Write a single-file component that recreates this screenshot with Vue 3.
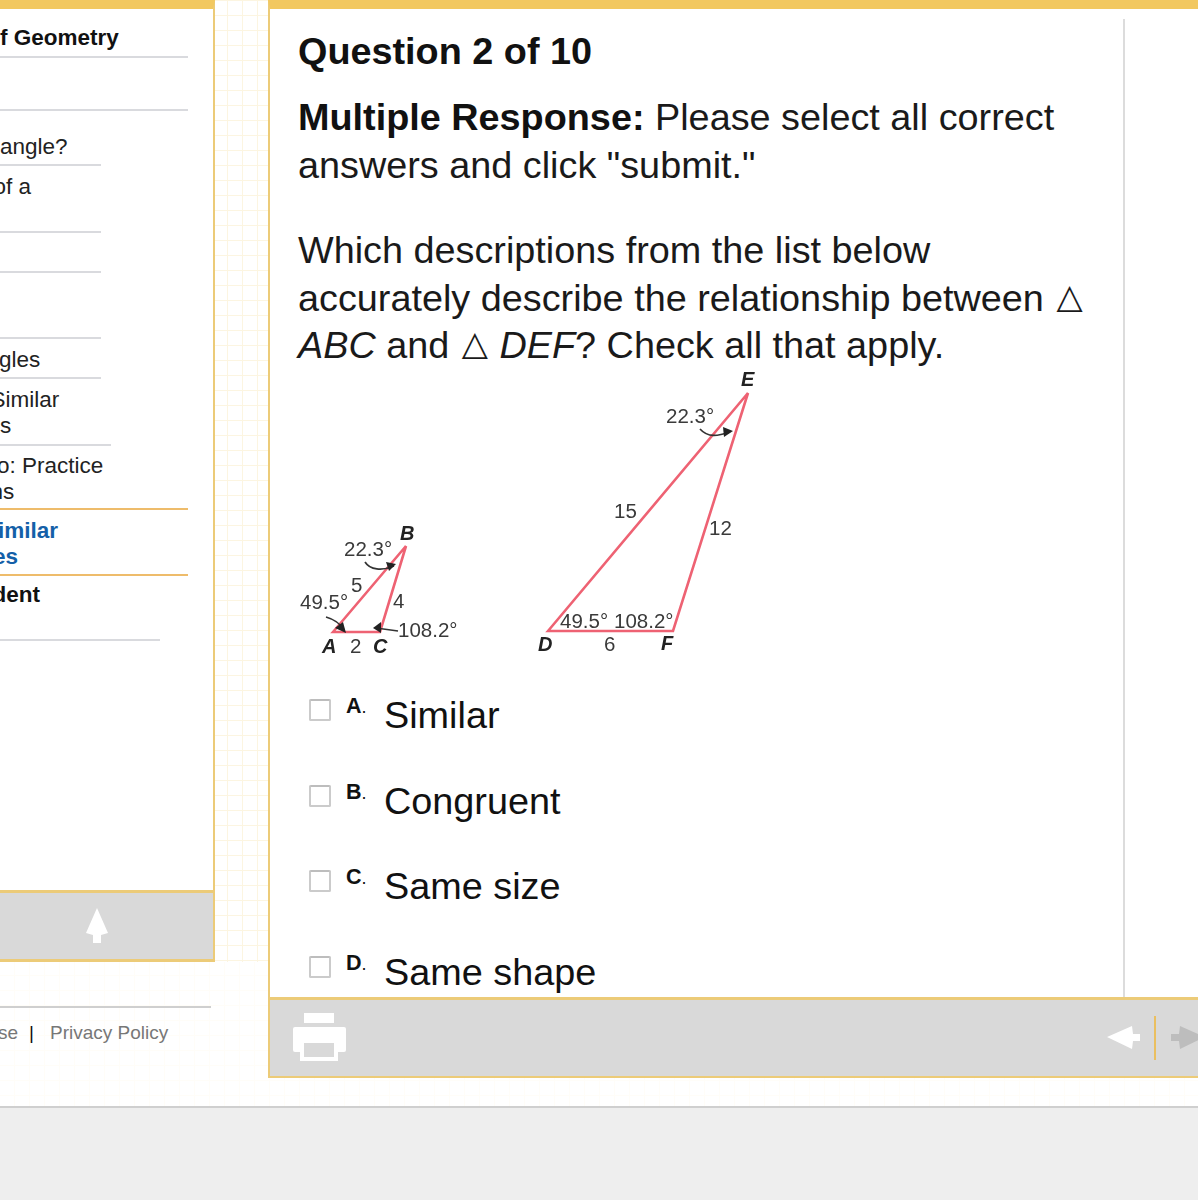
<script setup>
// sidebar rows, cut off on the left like in the course window
const navItems = [
  { lines: [['f Geometry', 0]], height: 49, rule: 188, top: 16, kind: 'bold' },
  { lines: [], height: 53, rule: 188 },
  { lines: [['angle?', 0]], height: 55, rule: 101, top: 23 },
  { lines: [['of a', -6.5]], height: 67, rule: 101 },
  { lines: [], height: 40, rule: 101 },
  { lines: [], height: 66, rule: 101 },
  { lines: [['gles', -1]], height: 40, rule: 101 },
  { lines: [['Similar', -9.5], ['s', 0]], height: 67, rule: 111 },
  { lines: [['o: Practice', -3], ['ns', -9.5]], height: 64, rule: 188, top: 7 },
  { lines: [['imilar', -2], ['es', -7]], height: 66, rule: 188, kind: 'current' },
  { lines: [['dent', -7.5]], height: 65, rule: 160, top: 6, kind: 'bold' }
]

const options = [
  { letter: 'A', text: 'Similar' },
  { letter: 'B', text: 'Congruent' },
  { letter: 'C', text: 'Same size' },
  { letter: 'D', text: 'Same shape' }
]

function ruleColor(item, i) {
  // the current row has orange rules above and below
  return item.kind === 'current' || navItems[i + 1]?.kind === 'current' ? '#eebc6b' : '#d9dade'
}
</script>

<template>
  <div class="page">
    <div class="stage">
      <div class="side">
        <div class="side-panel">
          <ul class="nav">
            <li
              v-for="(item, i) in navItems"
              :key="i"
              class="nav-item"
              :class="item.kind"
              :style="{ height: item.height + 'px', paddingTop: (item.top ?? 8) + 'px' }"
            >
              <span
                v-for="line in item.lines"
                :key="line[0]"
                class="nav-line"
                :style="{ marginLeft: line[1] + 'px' }"
              >{{ line[0] }}</span>
              <i class="nav-rule" :style="{ width: item.rule + 'px', background: ruleColor(item, i) }"></i>
            </li>
          </ul>
          <div class="side-bar">
            <svg class="up" width="24" height="36" viewBox="0 0 24 36">
              <path d="M12 0 L23 25 L16 27 L16 35 L8 35 L8 27 L1 25 Z" fill="#fff" />
            </svg>
          </div>
        </div>
        <div class="side-foot">
          <span class="foot-cut">se</span>
          <span class="sep">|</span>
          <span>Privacy Policy</span>
        </div>
      </div>

      <div class="gutter"></div>

      <div class="main">
        <div class="content">
          <div class="scroll">
            <h1>Question 2 of 10</h1>
            <p class="intro"><b>Multiple Response:</b> Please select all correct answers and click "submit."</p>
            <p class="question">
              Which descriptions from the list below accurately describe the relationship between <span class="delta">△</span> <em>ABC</em> and <span class="delta">△</span> <em>DEF</em>? Check all that apply.
            </p>

            <svg class="figure" width="470" height="300" viewBox="298 362 470 300">
              <g fill="none" stroke="#ee6273" stroke-width="2.6" stroke-linejoin="miter">
                <path d="M333 632 L406 546 L380 632 Z" />
                <path d="M548 631 L748 393 L673 631 Z" />
              </g>
              <g fill="none" stroke="#333" stroke-width="1.7">
                <path d="M365 562 C370 570 382 571 394 566" />
                <path d="M326 617 C333 619 340 623 344 630" />
                <path d="M398 631 L376 628" />
                <path d="M700 429 C708 438 718 436 730 432" />
              </g>
              <g fill="#222">
                <path d="M396 564 L386 562 L389 571 Z" />
                <path d="M346 633 L335 628 L343 622 Z" />
                <path d="M373 628 L381 622 L381 633 Z" />
                <path d="M733 431 L723 427 L724 437 Z" />
              </g>
              <g class="fig-text">
                <text x="344" y="556">22.3°</text>
                <text x="351" y="592">5</text>
                <text x="300" y="609">49.5°</text>
                <text x="393" y="608">4</text>
                <text x="398" y="637">108.2°</text>
                <text x="350" y="653">2</text>
                <text x="666" y="423">22.3°</text>
                <text x="614" y="518">15</text>
                <text x="709" y="535">12</text>
                <text x="560" y="628">49.5°</text>
                <text x="614" y="628">108.2°</text>
                <text x="604" y="651">6</text>
              </g>
              <g class="fig-label">
                <text x="400" y="540">B</text>
                <text x="322" y="653">A</text>
                <text x="373" y="653">C</text>
                <text x="741" y="386">E</text>
                <text x="538" y="651">D</text>
                <text x="661" y="650">F</text>
              </g>
            </svg>

            <ul class="options">
              <li v-for="opt in options" :key="opt.letter" class="option">
                <span class="check"></span>
                <span class="letter">{{ opt.letter }}<small>.</small></span>
                <span class="answer">{{ opt.text }}</span>
              </li>
            </ul>
          </div>
          <div class="side-rule"></div>
        </div>

        <div class="toolbar">
          <svg width="54" height="50" viewBox="0 0 54 50">
            <rect x="11" y="0" width="30" height="10" fill="#fff" />
            <rect x="0" y="14" width="53" height="25" rx="2" fill="#fff" />
            <rect x="7" y="30" width="38" height="18" fill="#fff" />
            <rect x="11" y="30" width="30" height="14" fill="#d9d9d9" />
          </svg>
          <div class="pager">
            <svg width="34" height="24" viewBox="0 0 34 24">
              <path d="M0 11 L25 0 L26 8 L33 8 L33 15 L26 15 L25 23 Z" fill="#fff" />
            </svg>
            <i class="pager-sep"></i>
            <svg class="next" width="27" height="24" viewBox="0 0 27 24">
              <path d="M0 8 L8 8 L9 0 L34 11 L9 23 L8 15 L0 15 Z" fill="#bdbdbd" />
            </svg>
          </div>
        </div>
      </div>
    </div>
    <div class="bottom"></div>
  </div>
</template>

<style scoped>
.page {
  width: 1198px;
  height: 1200px;
  overflow: hidden;
  display: flex;
  flex-direction: column;
  font-family: "Liberation Sans", Arial, sans-serif;
  color: #111;
}

.stage {
  height: 1106px;
  display: flex;
  background-color: #fff;
  background-image:
    linear-gradient(90deg, transparent 14px, #fffdf8 14px),
    linear-gradient(0deg, transparent 14px, #fffdf8 14px);
  background-size: 15px 100%, 100% 15px;
}

.side {
  width: 215px;
  flex: none;
}

.side-panel {
  height: 962px;
  display: flex;
  flex-direction: column;
  background: #fff;
  border-top: 9px solid #f2c860;
  border-right: 2px solid #eccb78;
  box-sizing: border-box;
}

.gutter {
  width: 53px;
  height: 962px;
  flex: none;
  background-color: #fff;
  background-image:
    linear-gradient(90deg, transparent 12px, #fcf5e1 12px 13px, transparent 13px),
    linear-gradient(180deg, #fcf5e1 1.5px, transparent 1.5px);
  background-size: 15px 100%, 100% 15px;
}

.nav {
  flex: 1;
  list-style: none;
  margin: 0;
  padding: 0;
  overflow: hidden;
  font-size: 22.5px;
  line-height: 26px;
}

.nav-item {
  position: relative;
  box-sizing: border-box;
  color: #222;
}

.nav-item.bold {
  font-weight: bold;
  color: #111;
}

.nav-item.current {
  font-weight: bold;
  color: #1460a8;
}

.nav-line {
  display: block;
  white-space: nowrap;
}

.nav-rule {
  position: absolute;
  left: 0;
  bottom: 0;
  height: 2px;
}

.side-bar {
  height: 72px;
  flex: none;
  display: flex;
  align-items: center;
  justify-content: flex-start;
  padding-left: 85px;
  box-sizing: border-box;
  background: #d9d9d9;
  border-top: 3px solid #eccb78;
  border-bottom: 3px solid #eccb78;
}

.side-foot {
  width: 211px;
  margin-top: 44px;
  padding-top: 13px;
  border-top: 2px solid #cfcfcf;
  font-size: 19px;
  line-height: 24px;
  color: #777;
  white-space: nowrap;
  overflow: hidden;
}

.foot-cut {
  margin-left: -2px;
}

.sep {
  color: #111;
  margin: 0 16px 0 11px;
}

.main {
  width: 930px;
  flex: none;
  height: 1078px;
  display: flex;
  flex-direction: column;
  background: #fff;
}

.content {
  flex: 1;
  min-height: 0;
  display: flex;
  border-top: 9px solid #f2c860;
  border-left: 2px solid #eccb78;
}

.scroll {
  width: 853px;
  flex: none;
  box-sizing: border-box;
  padding: 21px 0 0 28px;
  overflow: hidden;
}

.side-rule {
  width: 2px;
  margin-top: 10px;
  background: #dcdcdc;
}

h1 {
  margin: 0;
  font-size: 37.8px;
  line-height: 42px;
  font-weight: bold;
}

.intro,
.question {
  margin: 0;
  font-size: 37.8px;
  line-height: 47.5px;
  color: #1a1a1a;
}

.intro {
  margin-top: 22px;
}

.intro b {
  color: #111;
}

.question {
  width: 795px;
  margin-top: 38px;
}

.delta {
  font-family: "DejaVu Sans", sans-serif;
  font-size: 34px;
  line-height: 0;
  vertical-align: 3px;
  margin: 0 1px 0 2px;
}

.figure {
  display: block;
  margin-top: -7.5px;
  filter: blur(0.4px);
}

.fig-text {
  font-size: 20.5px;
  fill: #3a3a3a;
}

.fig-label {
  font-size: 20px;
  font-weight: bold;
  font-style: italic;
  fill: #222;
}

.options {
  list-style: none;
  margin: 0;
  padding: 0 0 0 11px;
}

.option {
  height: 85.5px;
  display: flex;
  align-items: flex-start;
}

.check {
  width: 18px;
  height: 18px;
  margin-top: 37px;
  flex: none;
  border: 2px solid #cbcbcb;
  border-top-color: #bdbdbd;
  border-radius: 2px;
  background: #fff;
}

.letter {
  width: 38px;
  margin-left: 15px;
  margin-top: 32px;
  flex: none;
  font-size: 21.5px;
  line-height: 24px;
  font-weight: bold;
}

.letter small {
  font-size: 18px;
  font-weight: normal;
}

.answer {
  margin-top: 31px;
  font-size: 37.8px;
  line-height: 44px;
  white-space: nowrap;
}

.toolbar {
  height: 81px;
  flex: none;
  box-sizing: border-box;
  display: flex;
  align-items: center;
  justify-content: space-between;
  padding-left: 23px;
  background: #d9d9d9;
  border: 2px solid #eccb78;
  border-top-width: 3px;
  border-right: 0;
}

.pager {
  display: flex;
  align-items: center;
  gap: 14px;
}

.pager-sep {
  width: 2px;
  height: 44px;
  margin: 0 1px 0 -1px;
  background: #eabf60;
}

.bottom {
  flex: 1;
  background: #eeeeee;
  border-top: 2px solid #cfcfcf;
}
</style>
